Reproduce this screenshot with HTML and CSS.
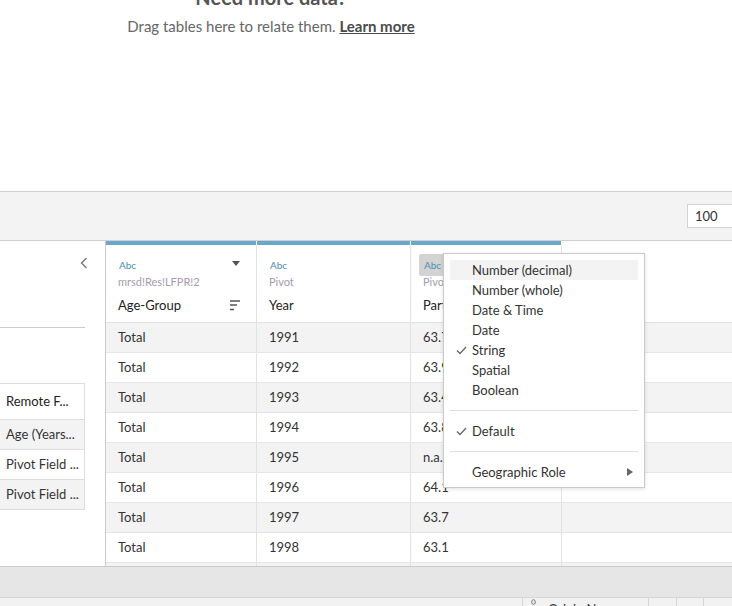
FILE: index.html
```html
<!DOCTYPE html>
<html>
<head>
<meta charset="utf-8">
<link rel="stylesheet" href="styles.css">
</head>
<body>
<div class="top">
  <h2>Need more data?</h2>
  <p>Drag tables here to relate them. <a>Learn more</a></p>
</div>
<div class="toolbar">
  <div class="rows-input">100</div>
</div>
<div class="main">
  <div class="left">
    <svg class="chevron" width="8" height="12" viewBox="0 0 8 12"><polyline points="6.5,1 1.5,6 6.5,11" fill="none" stroke="#777" stroke-width="1.4"/></svg>
    <div class="hline"></div>
    <div class="ltable">
      <div class="lrow lhead">Remote F...</div>
      <div class="lrow alt">Age (Years...</div>
      <div class="lrow">Pivot Field ...</div>
      <div class="lrow alt">Pivot Field ...</div>
    </div>
  </div>
  <div class="grid">
    <div class="hrow">
      <div class="hcell w1">
        <div class="bar"></div>
        <div class="hbody">
          <div class="hline1"><span class="badge">Abc</span>
            <svg class="drop" width="8" height="6" viewBox="0 0 8 6"><polygon points="0,0 8,0 4,5" fill="#555"/></svg>
          </div>
          <div class="src">mrsd!Res!LFPR!2</div>
          <div class="name-row"><span class="name">Age-Group</span>
            <svg class="sort" width="12" height="11" viewBox="0 0 12 11"><line x1="0" y1="1" x2="10" y2="1" stroke="#555" stroke-width="1.5"/><line x1="0" y1="5" x2="7" y2="5" stroke="#555" stroke-width="1.5"/><line x1="0" y1="9.5" x2="4" y2="9.5" stroke="#555" stroke-width="1.5"/></svg>
          </div>
        </div>
      </div>
      <div class="hcell w2">
        <div class="bar"></div>
        <div class="hbody">
          <div class="hline1"><span class="badge">Abc</span></div>
          <div class="src">Pivot</div>
          <div class="name-row"><span class="name">Year</span></div>
        </div>
      </div>
      <div class="hcell w3">
        <div class="bar"></div>
        <div class="hbody">
          <div class="hline1"><span class="badge active">Abc</span></div>
          <div class="src">Pivot Field Values</div>
          <div class="name-row"><span class="name">Participation Rate</span></div>
        </div>
      </div>
      <div class="hfill"></div>
    </div>
    <div class="row alt"><div class="cell w1">Total</div><div class="cell w2">1991</div><div class="cell w3">63.7</div><div class="fill"></div></div>
    <div class="row"><div class="cell w1">Total</div><div class="cell w2">1992</div><div class="cell w3">63.9</div><div class="fill"></div></div>
    <div class="row alt"><div class="cell w1">Total</div><div class="cell w2">1993</div><div class="cell w3">63.4</div><div class="fill"></div></div>
    <div class="row"><div class="cell w1">Total</div><div class="cell w2">1994</div><div class="cell w3">63.8</div><div class="fill"></div></div>
    <div class="row alt"><div class="cell w1">Total</div><div class="cell w2">1995</div><div class="cell w3">n.a.</div><div class="fill"></div></div>
    <div class="row"><div class="cell w1">Total</div><div class="cell w2">1996</div><div class="cell w3">64.1</div><div class="fill"></div></div>
    <div class="row alt"><div class="cell w1">Total</div><div class="cell w2">1997</div><div class="cell w3">63.7</div><div class="fill"></div></div>
    <div class="row"><div class="cell w1">Total</div><div class="cell w2">1998</div><div class="cell w3">63.1</div><div class="fill"></div></div>
    <div class="row alt"><div class="cell w1">Total</div><div class="cell w2">1999</div><div class="cell w3">62.8</div><div class="fill"></div></div>
  </div>
</div>
<div class="statusbar"></div>
<div class="strip">
  <div class="sspace"></div>
  <div class="scell s1">
    <svg class="sicon" width="5" height="6" viewBox="0 0 5 6"><ellipse cx="2.5" cy="3" rx="1.8" ry="2.3" fill="none" stroke="#777" stroke-width="1"/></svg>
    <span class="stext">Origin Name</span>
  </div>
  <div class="scell s2"></div>
  <div class="scell s3"></div>
  <div class="scell s4"></div>
</div>

<div class="menu">
  <div class="mitem hover">Number (decimal)</div>
  <div class="mitem">Number (whole)</div>
  <div class="mitem">Date &amp; Time</div>
  <div class="mitem">Date</div>
  <div class="mitem"><svg class="check" width="11" height="9" viewBox="0 0 11 9"><polyline points="1,4.5 4,7.5 10,1" fill="none" stroke="#666" stroke-width="1.3"/></svg>String</div>
  <div class="mitem">Spatial</div>
  <div class="mitem">Boolean</div>
  <div class="msep"></div>
  <div class="mitem"><svg class="check" width="11" height="9" viewBox="0 0 11 9"><polyline points="1,4.5 4,7.5 10,1" fill="none" stroke="#666" stroke-width="1.3"/></svg>Default</div>
  <div class="msep"></div>
  <div class="mitem">Geographic Role<svg class="arrow" width="6" height="8" viewBox="0 0 6 8"><polygon points="0,0 6,4 0,8" fill="#666"/></svg></div>
</div>
</body>
</html>
```
FILE: styles.css
```css
* { box-sizing: border-box; margin: 0; padding: 0; }
html, body { width: 732px; height: 606px; overflow: hidden; }
body {
  font-family: Lato, "Open Sans", sans-serif;
  color: #333;
  background: #fff;
  position: relative;
}

.top { height: 191px; width: 542px; text-align: center; overflow: hidden; }
.top h2 { font-size: 20px; line-height: 24px; font-weight: 700; color: #555; margin-top: -15px; }
.top p { font-size: 15px; line-height: 20px; color: #666; margin-top: 7px; }
.top a { color: #4a4a4a; font-weight: 700; text-decoration: underline; }

.toolbar {
  height: 50px;
  border-top: 1px solid #cfcfcf;
  border-bottom: 1px solid #cfcfcf;
  background: #f3f3f3;
  display: flex;
  justify-content: flex-end;
  align-items: flex-start;
}
.rows-input {
  margin-top: 12px;
  width: 50px;
  margin-right: -5px;
  height: 24px;
  border: 1px solid #d2d2d2;
  background: #fff;
  font-size: 13px;
  line-height: 22px;
  padding-left: 7px;
  color: #333;
}

.main { height: 325px; display: flex; }

.left { width: 105px; flex: none; display: flex; flex-direction: column; padding-top: 16px; }
.chevron { display: block; margin-left: 80px; }
.hline { width: 85px; height: 1px; background: #cbcbcb; margin-top: 58px; }
.ltable {
  width: 85px;
  margin-top: 55px;
  border-top: 1px solid #dcdcdc;
  border-right: 1px solid #dcdcdc;
}
.lrow {
  height: 30px;
  line-height: 29px;
  border-bottom: 1px solid #dcdcdc;
  font-size: 13px;
  padding-left: 6px;
  white-space: nowrap;
  overflow: hidden;
  color: #333;
}
.lrow.lhead { height: 36px; line-height: 35px; color: #222; }
.lrow.alt { background: #f3f3f3; }

.grid {
  flex: 1;
  border-left: 1px solid #cbcbcb;
  overflow: hidden;
  display: flex;
  flex-direction: column;
}
.w1 { width: 151px; }
.w2 { width: 154px; }
.w3 { width: 151px; }

.hrow { display: flex; height: 82px; flex: none; border-bottom: 1px solid #e2e2e2; }
.hcell { display: flex; flex-direction: column; flex: none; }
.bar { height: 4px; background: #6ba7c8; margin-right: 1px; }
.hbody {
  flex: 1;
  border-right: 1px solid #e2e2e2;
  padding: 9px 16px 0 12px;
  overflow: hidden;
}
.hfill { flex: 1; }
.hline1 { display: flex; align-items: center; justify-content: space-between; height: 22px; }
.badge {
  display: inline-block;
  height: 22px;
  line-height: 22px;
  padding: 0 5px;
  margin-left: -4px;
  font-size: 10px;
  color: #4a8db4;
  border-radius: 2px;
}
.badge.active { background: #d3d3d3; }
.drop { display: block; margin-top: -2px; }
.src {
  font-size: 11px;
  line-height: 12px;
  color: #a39cae;
  white-space: nowrap;
}
.name-row {
  display: flex;
  justify-content: space-between;
  align-items: center;
  height: 18px;
  margin-top: 8px;
}
.name { font-size: 13px; line-height: 18px; color: #222; white-space: nowrap; }
.sort { display: block; margin-right: -2px; }

.row {
  display: flex;
  height: 30px;
  flex: none;
  border-bottom: 1px solid #e6e6e6;
}
.row.alt { background: #f3f3f3; }
.cell {
  flex: none;
  border-right: 1px solid #e2e2e2;
  padding-left: 12px;
  font-size: 13px;
  line-height: 29px;
  color: #333;
}
.fill { flex: 1; }

.statusbar { height: 31px; border-top: 1px solid #cbcbcb; background: #e6e6e6; }
.strip {
  height: 9px;
  border-top: 1px solid #d6d6d6;
  background: #f2f2f2;
  display: flex;
  overflow: hidden;
}
.sspace { width: 522px; flex: none; }
.scell { border-left: 1px solid #d6d6d6; flex: none; display: flex; align-items: flex-start; }
.s1 { width: 126px; padding-left: 8px; }
.s2 { width: 28px; }
.s3 { width: 27px; }
.s4 { flex: 1; }
.sicon { display: block; margin-top: 1px; }
.stext { font-size: 13px; line-height: 18px; margin-top: 2px; margin-left: 12px; color: #333; white-space: nowrap; }

.menu {
  position: absolute;
  left: 443px;
  top: 253px;
  width: 202px;
  height: 235px;
  background: #fff;
  border: 1px solid #cacaca;
  box-shadow: 0 1px 4px rgba(0,0,0,0.12);
  padding: 6px;
}
.mitem {
  position: relative;
  height: 20px;
  line-height: 20px;
  padding-left: 22px;
  font-size: 13px;
  color: #333;
  display: flex;
  align-items: center;
}
.mitem.hover { background: #f3f3f3; }
.check { position: absolute; left: 6px; top: 6px; }
.arrow { margin-left: auto; margin-right: 5px; }
.msep { height: 1px; background: #dedede; margin: 10px 0; }
```
